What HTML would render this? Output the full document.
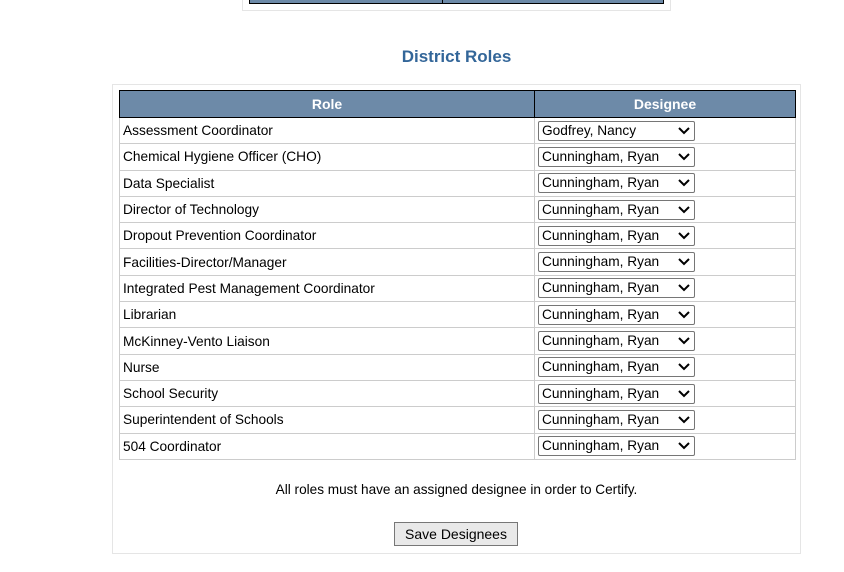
<!DOCTYPE html>
<html><head><style>
body{margin:0;background:#fff;font-family:"Liberation Sans",Arial,sans-serif;font-size:14px;color:#000;width:844px;height:572px;position:relative;overflow:hidden}
.abs{position:absolute}
table{border-collapse:collapse;position:absolute;left:119px;top:90px;width:677px}
th{background:#6d8aa8;color:#fff;font-weight:bold;font-size:14px;height:26px;border:1px solid #000;padding:0}
td{border:1px solid #ccc;height:25.3px;padding:0 3px;font-size:13.7px}
.sel{display:inline-block;position:relative;box-sizing:border-box;width:157px;height:20px;border:1px solid #767676;border-radius:2px;background:#fff;line-height:18px;padding-left:3px;font-size:13.7px;vertical-align:middle}
.sel svg{position:absolute;right:4px;top:5px}
</style></head><body>
<div class="abs" style="left:242px;top:-2px;width:427px;height:12px;border:1px solid #e5e5e5;border-top:none"></div>
<div class="abs" style="left:249px;top:-2px;width:413px;height:4px;background:#6d8aa8;border:1px solid #000"></div>
<div class="abs" style="left:442px;top:0;width:1px;height:4px;background:#000"></div>
<div class="abs" style="left:0;top:47px;width:913px;text-align:center;font-weight:bold;font-size:17px;color:#336699">District Roles</div>
<div class="abs" style="left:112px;top:84px;width:687px;height:468px;border:1px solid #e5e5e5"></div>
<table>
<tr><th style="width:414px">Role</th><th>Designee</th></tr>
<tr><td>Assessment Coordinator</td><td><span class="sel">Godfrey, Nancy<svg width="12" height="8"><path d="M1 1L6 6L11 1" stroke="#000" stroke-width="2" fill="none"/></svg></span></td></tr>
<tr><td>Chemical Hygiene Officer (CHO)</td><td><span class="sel">Cunningham, Ryan<svg width="12" height="8"><path d="M1 1L6 6L11 1" stroke="#000" stroke-width="2" fill="none"/></svg></span></td></tr>
<tr><td>Data Specialist</td><td><span class="sel">Cunningham, Ryan<svg width="12" height="8"><path d="M1 1L6 6L11 1" stroke="#000" stroke-width="2" fill="none"/></svg></span></td></tr>
<tr><td>Director of Technology</td><td><span class="sel">Cunningham, Ryan<svg width="12" height="8"><path d="M1 1L6 6L11 1" stroke="#000" stroke-width="2" fill="none"/></svg></span></td></tr>
<tr><td>Dropout Prevention Coordinator</td><td><span class="sel">Cunningham, Ryan<svg width="12" height="8"><path d="M1 1L6 6L11 1" stroke="#000" stroke-width="2" fill="none"/></svg></span></td></tr>
<tr><td>Facilities-Director/Manager</td><td><span class="sel">Cunningham, Ryan<svg width="12" height="8"><path d="M1 1L6 6L11 1" stroke="#000" stroke-width="2" fill="none"/></svg></span></td></tr>
<tr><td>Integrated Pest Management Coordinator</td><td><span class="sel">Cunningham, Ryan<svg width="12" height="8"><path d="M1 1L6 6L11 1" stroke="#000" stroke-width="2" fill="none"/></svg></span></td></tr>
<tr><td>Librarian</td><td><span class="sel">Cunningham, Ryan<svg width="12" height="8"><path d="M1 1L6 6L11 1" stroke="#000" stroke-width="2" fill="none"/></svg></span></td></tr>
<tr><td>McKinney-Vento Liaison</td><td><span class="sel">Cunningham, Ryan<svg width="12" height="8"><path d="M1 1L6 6L11 1" stroke="#000" stroke-width="2" fill="none"/></svg></span></td></tr>
<tr><td>Nurse</td><td><span class="sel">Cunningham, Ryan<svg width="12" height="8"><path d="M1 1L6 6L11 1" stroke="#000" stroke-width="2" fill="none"/></svg></span></td></tr>
<tr><td>School Security</td><td><span class="sel">Cunningham, Ryan<svg width="12" height="8"><path d="M1 1L6 6L11 1" stroke="#000" stroke-width="2" fill="none"/></svg></span></td></tr>
<tr><td>Superintendent of Schools</td><td><span class="sel">Cunningham, Ryan<svg width="12" height="8"><path d="M1 1L6 6L11 1" stroke="#000" stroke-width="2" fill="none"/></svg></span></td></tr>
<tr><td>504 Coordinator</td><td><span class="sel">Cunningham, Ryan<svg width="12" height="8"><path d="M1 1L6 6L11 1" stroke="#000" stroke-width="2" fill="none"/></svg></span></td></tr>
</table>
<div class="abs" style="left:112px;top:482px;width:689px;text-align:center;font-size:13.6px">All roles must have an assigned designee in order to Certify.</div>
<div class="abs" style="left:394px;top:522px;width:124px;height:24px;box-sizing:border-box;border:1px solid #777;background:#e9e9e9;text-align:center;line-height:22px;font-size:14px">Save Designees</div>
</body></html>
